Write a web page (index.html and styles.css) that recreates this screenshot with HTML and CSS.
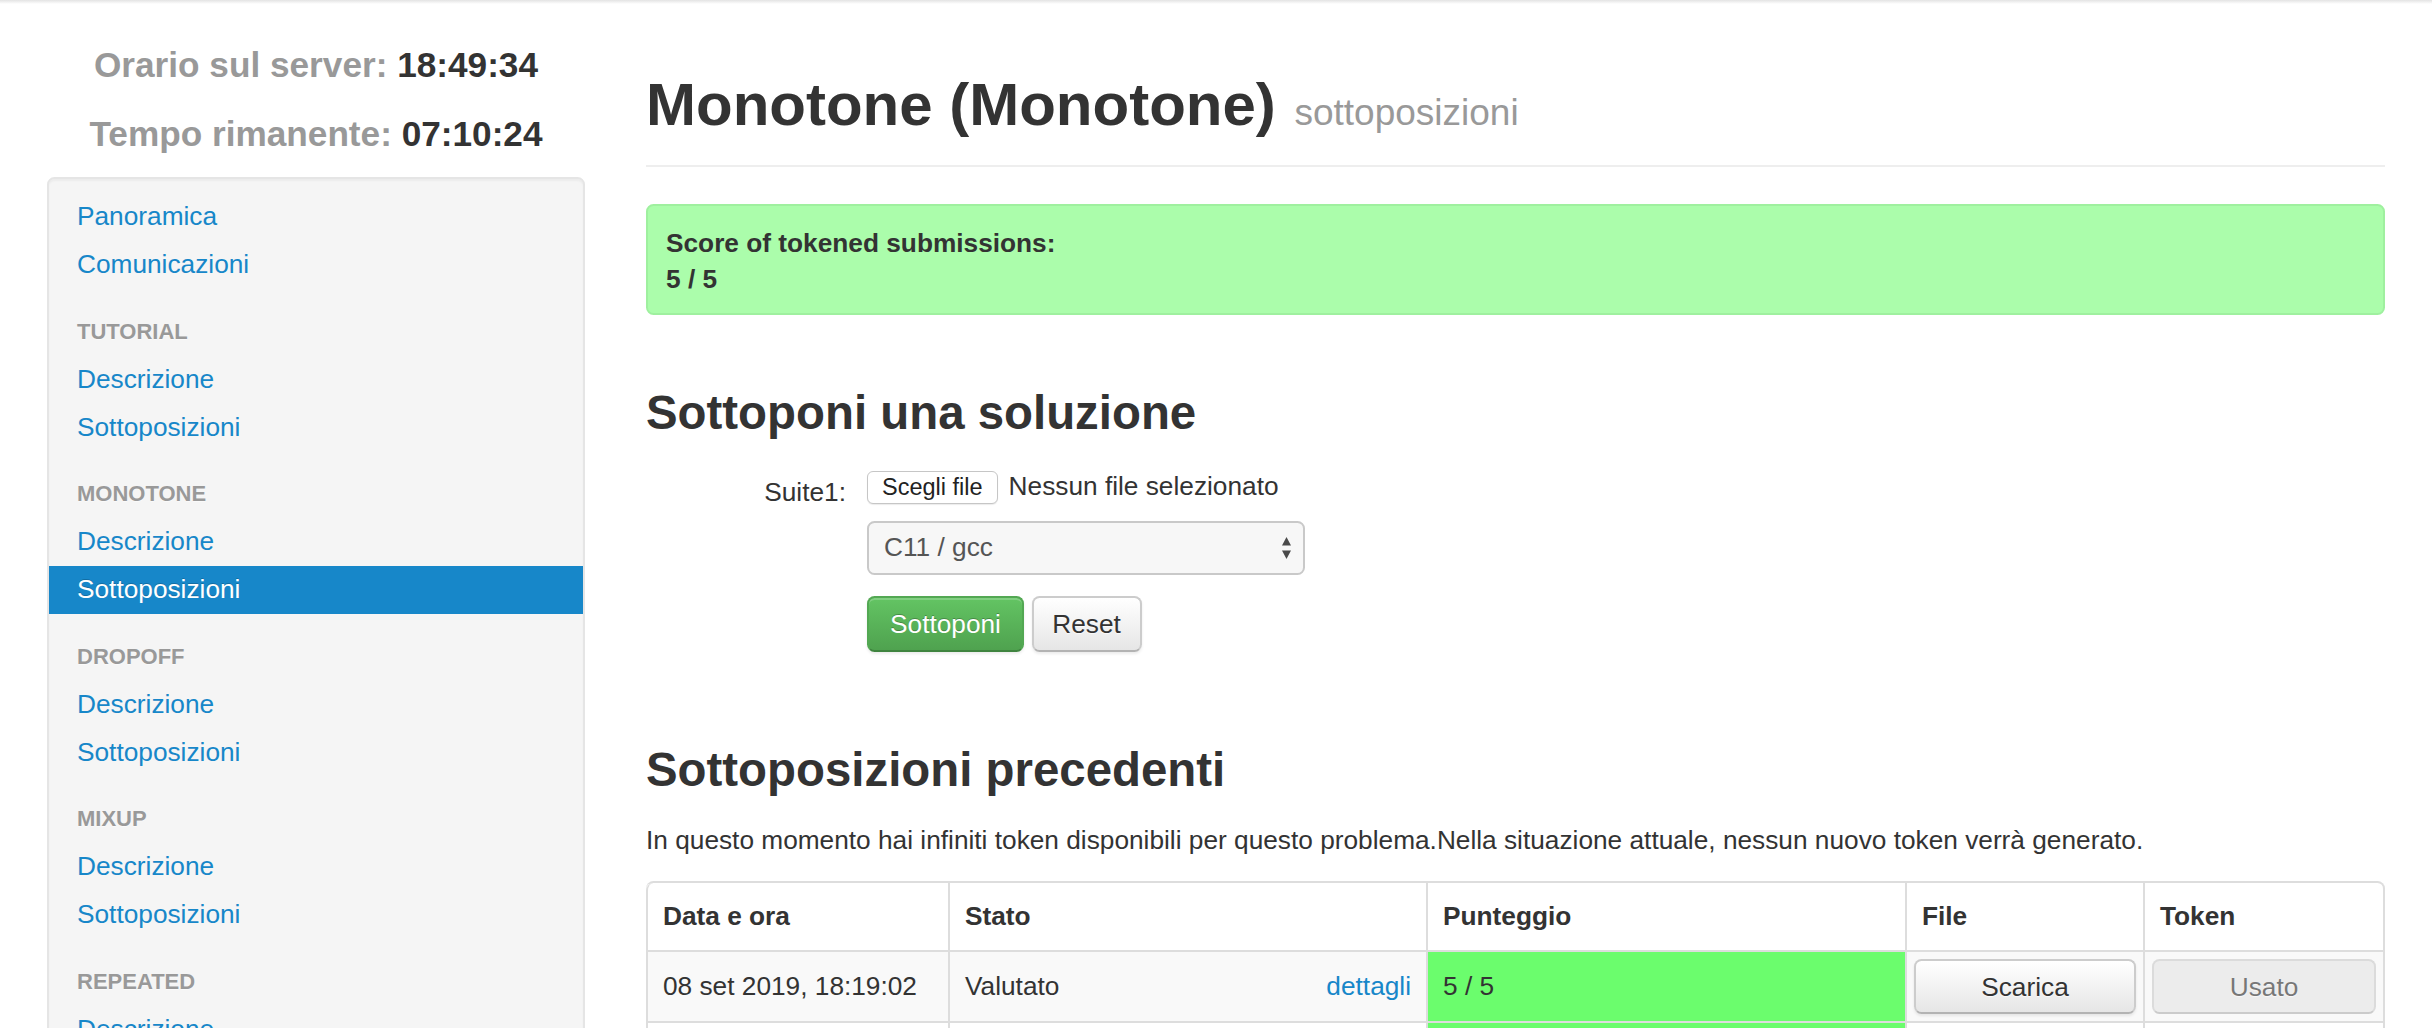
FILE: index.html
```html
<!DOCTYPE html>
<html lang="it">
<head>
<meta charset="utf-8">
<title>Monotone (Monotone) sottoposizioni</title>
<link rel="stylesheet" href="styles.css">
</head>
<body>
<div class="topbar"></div>
<div class="layout">
  <aside class="sidebar">
    <div class="clock">
      <div class="clock-line">Orario sul server: <span class="clock-val">18:49:34</span></div>
      <div class="clock-line">Tempo rimanente: <span class="clock-val">07:10:24</span></div>
    </div>
    <nav class="well">
      <a class="nav-item" href="#">Panoramica</a>
      <a class="nav-item" href="#">Comunicazioni</a>
      <span class="nav-header">Tutorial</span>
      <a class="nav-item" href="#">Descrizione</a>
      <a class="nav-item" href="#">Sottoposizioni</a>
      <span class="nav-header">Monotone</span>
      <a class="nav-item" href="#">Descrizione</a>
      <a class="nav-item active" href="#">Sottoposizioni</a>
      <span class="nav-header">Dropoff</span>
      <a class="nav-item" href="#">Descrizione</a>
      <a class="nav-item" href="#">Sottoposizioni</a>
      <span class="nav-header">Mixup</span>
      <a class="nav-item" href="#">Descrizione</a>
      <a class="nav-item" href="#">Sottoposizioni</a>
      <span class="nav-header">Repeated</span>
      <a class="nav-item" href="#">Descrizione</a>
      <a class="nav-item" href="#">Sottoposizioni</a>
    </nav>
  </aside>
  <main class="main">
    <div class="page-header">
      <h1 class="title">Monotone (Monotone) <small class="title-sub">sottoposizioni</small></h1>
    </div>
    <div class="score-box">
      <div>Score of tokened submissions:</div>
      <div>5 / 5</div>
    </div>

    <h2 class="section-title">Sottoponi una soluzione</h2>
    <form class="submit-form">
      <div class="form-row">
        <label class="form-label">Suite1:</label>
        <div class="form-controls">
          <div class="file-row">
            <button type="button" class="file-btn">Scegli file</button>
            <span class="file-name">Nessun file selezionato</span>
          </div>
          <div class="select">
            <span>C11 / gcc</span>
            <svg class="select-arrows" width="11" height="24" viewBox="0 0 11 24"><path d="M5.5 1 L10 9.5 H1 Z" fill="#4a4a4a"/><path d="M5.5 23 L10 14.5 H1 Z" fill="#4a4a4a"/></svg>
          </div>
          <div class="actions">
            <button type="button" class="btn btn-success">Sottoponi</button>
            <button type="button" class="btn btn-reset">Reset</button>
          </div>
        </div>
      </div>
    </form>

    <h2 class="section-title section-title-2">Sottoposizioni precedenti</h2>
    <p class="lead-text">In questo momento hai infiniti token disponibili per questo problema.Nella situazione attuale, nessun nuovo token verrà generato.</p>

    <table class="subs">
      <thead>
        <tr>
          <th class="c-date">Data e ora</th>
          <th class="c-status">Stato</th>
          <th class="c-score">Punteggio</th>
          <th class="c-file">File</th>
          <th class="c-token">Token</th>
        </tr>
      </thead>
      <tbody>
        <tr>
          <td>08 set 2019, 18:19:02</td>
          <td>Valutato <a class="details" href="#">dettagli</a></td>
          <td class="score">5 / 5</td>
          <td class="btn-cell"><button type="button" class="btn btn-block">Scarica</button></td>
          <td class="btn-cell"><button type="button" class="btn btn-block" disabled>Usato</button></td>
        </tr>
        <tr>
          <td>08 set 2019, 18:12:40</td>
          <td>Valutato <a class="details" href="#">dettagli</a></td>
          <td class="score">5 / 5</td>
          <td class="btn-cell"><button type="button" class="btn btn-block">Scarica</button></td>
          <td class="btn-cell"><button type="button" class="btn btn-block" disabled>Usato</button></td>
        </tr>
      </tbody>
    </table>
  </main>
</div>
</body>
</html>
```
FILE: styles.css
```css
* { box-sizing: border-box; }

html, body {
  margin: 0;
  padding: 0;
  background: #ffffff;
}

body {
  font-family: "Liberation Sans", Arial, Helvetica, sans-serif;
  font-size: 26.25px;
  line-height: 37.5px;
  color: #333333;
}

.topbar {
  height: 4px;
  background: linear-gradient(to bottom, #e3e3e3, #ffffff);
}

.layout {
  display: flex;
  align-items: flex-start;
  gap: 61px;
  padding: 0 47px;
}

.sidebar {
  width: 538px;
  flex: none;
}

.main {
  flex: 1;
  min-width: 0;
}

/* clock */
.clock {
  text-align: center;
  font-weight: bold;
  font-size: 35.2px;
  line-height: 44px;
  color: #999999;
  margin-bottom: 20.3px;
}

.clock-line { margin-top: 25.4px; }
.clock-line:first-child { margin-top: 39px; }
.clock-val { color: #333333; }

/* sidebar nav */
.well {
  background: #f5f5f5;
  border: 2px solid #e5e5e5;
  border-radius: 7.5px;
  box-shadow: inset 0 2px 2px rgba(0, 0, 0, 0.04);
  padding: 14.5px 0;
}

.nav-item {
  display: block;
  padding: 5.25px 28px;
  color: #1787c9;
  text-decoration: none;
}

.nav-item.active {
  background: #1787c9;
  color: #ffffff;
  text-shadow: 0 -1px 0 rgba(0, 0, 0, 0.2);
}

.nav-header {
  display: block;
  margin-top: 18.5px;
  padding: 5.25px 28px;
  font-size: 22px;
  font-weight: bold;
  color: #999999;
  text-transform: uppercase;
  text-shadow: 0 1px 0 rgba(255, 255, 255, 0.5);
}

/* main */
.page-header {
  margin-top: 62.7px;
  padding-bottom: 23.5px;
  border-bottom: 2px solid #eeeeee;
}

.title {
  margin: 0;
  font-size: 60px;
  line-height: 75px;
  font-weight: bold;
  color: #333333;
}

.title-sub {
  margin-left: 2px;
  font-size: 37px;
  line-height: 1;
  font-weight: normal;
  color: #999999;
}

.score-box {
  margin-top: 37px;
  padding: 18.5px 18px 16.5px;
  background: #abfdab;
  border: 2px solid #9ff09f;
  border-radius: 7.5px;
  line-height: 36px;
  font-weight: bold;
  color: #333333;
}

.section-title {
  margin: 70px 0 0;
  font-size: 47.4px;
  line-height: 56px;
  font-weight: bold;
  color: #333333;
}

.section-title-2 { margin-top: 90.7px; }

.submit-form { margin-top: 27.3px; }

.form-row { display: flex; }

.form-label {
  flex: none;
  width: 200px;
  padding-top: 6px;
  text-align: right;
  line-height: 37.5px;
}

.form-controls { margin-left: 21px; }

.file-row {
  display: flex;
  align-items: center;
  gap: 11px;
  height: 37.5px;
}

.file-btn {
  height: 32.6px;
  padding: 0 14px;
  font-family: inherit;
  font-size: 23.5px;
  line-height: 29px;
  color: #222222;
  background: #ffffff;
  border: 1.5px solid #c6c6c6;
  border-radius: 6px;
  box-shadow: 0 1px 1px rgba(0, 0, 0, 0.08);
}

.select {
  display: flex;
  align-items: center;
  width: 438px;
  height: 54.3px;
  margin-top: 14.7px;
  padding: 0 11px 0 15px;
  background: #f7f7f7;
  border: 2px solid #c9c9c9;
  border-radius: 7.5px;
  color: #555555;
}

.select-arrows { margin-left: auto; }

.actions {
  display: flex;
  gap: 7.5px;
  margin-top: 21px;
}

.btn {
  display: block;
  height: 55.7px;
  padding: 0 22.5px;
  font-family: inherit;
  font-size: 26.25px;
  line-height: 50px;
  text-align: center;
  color: #333333;
  background: linear-gradient(to bottom, #ffffff, #e6e6e6);
  border: 2px solid #cccccc;
  border-bottom-color: #b3b3b3;
  border-radius: 7.5px;
  box-shadow: inset 0 2px 0 rgba(255, 255, 255, 0.2), 0 2px 3px rgba(0, 0, 0, 0.08);
  text-shadow: 0 1px 1px rgba(255, 255, 255, 0.75);
}

.btn-success {
  width: 157px;
  padding: 0;
  color: #ffffff;
  background: linear-gradient(to bottom, #63c463, #4fa24f);
  border-color: #53a853 #53a853 #3f843f;
  text-shadow: 0 -1px 0 rgba(0, 0, 0, 0.25);
}

.btn-reset {
  width: 110px;
  padding: 0;
}

.btn-block {
  width: 100%;
  height: 55px;
}

.btn[disabled] {
  background: #e6e6e6;
  opacity: 0.65;
  box-shadow: none;
}

.lead-text { margin: 23.7px 0 0; }

/* table */
.subs {
  width: 100%;
  margin-top: 21.4px;
  table-layout: fixed;
  border-collapse: separate;
  border-spacing: 0;
  border: 2px solid #dddddd;
  border-left: 0;
  border-radius: 7.5px;
}

.subs th,
.subs td {
  padding: 15px;
  border-left: 2px solid #dddddd;
  line-height: 37.5px;
  text-align: left;
  vertical-align: middle;
}

.subs th { font-weight: bold; }
.subs th:first-child { border-top-left-radius: 7.5px; }
.subs th:last-child { border-top-right-radius: 7.5px; }

.subs td { border-top: 2px solid #dddddd; }

.subs tbody tr:nth-child(odd) td { background: #f9f9f9; }
.subs tbody tr td.score,
.subs tbody tr:nth-child(odd) td.score { background: #6bfd6d; }
.subs td.btn-cell { padding: 7px; }

.c-date { width: 302px; }
.c-status { width: 478px; }
.c-score { width: 479px; }
.c-file { width: 238px; }
.c-token { width: 240px; }

.details {
  float: right;
  color: #1787c9;
  text-decoration: none;
}
```
